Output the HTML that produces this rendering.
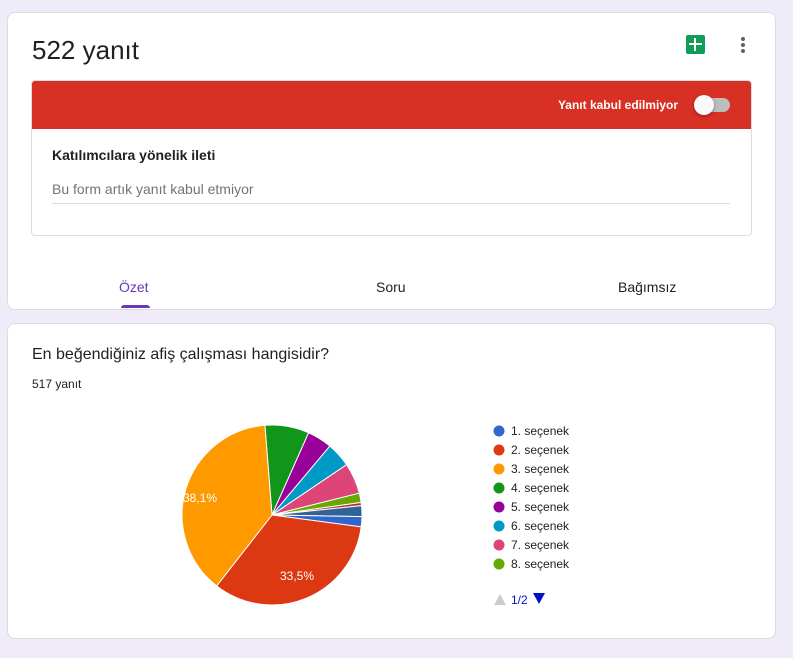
<!DOCTYPE html>
<html><head><meta charset="utf-8"><style>
body{margin:0;background:#f0ebf8;font-family:"Liberation Sans",Arial,sans-serif;width:793px;height:658px;position:relative;overflow:hidden}
.card{position:absolute;background:#fff;border:1px solid #dadce0;border-radius:8px}
.abs{position:absolute}
</style></head><body>
<div class="card" style="left:7px;top:12px;width:767px;height:296px">
  <div class="abs" style="left:24px;top:22px;font-size:26px;color:#202124">522 yanıt</div>
  <div class="abs" style="left:678px;top:22px;width:19px;height:19px;background:#0f9d58;border-radius:2px">
    <div class="abs" style="left:3px;top:8px;width:13px;height:2px;background:#fff"></div>
    <div class="abs" style="left:8px;top:3px;width:2px;height:13px;background:#fff"></div>
  </div>
  <div class="abs" style="left:733px;top:24px;width:4px;height:4px;border-radius:2px;background:#5f6368;box-shadow:0 6px 0 #5f6368,0 12px 0 #5f6368"></div>
  <div class="abs" style="left:23px;top:67px;width:719px;height:154px;border:1px solid #dadce0;border-radius:4px;overflow:hidden">
    <div style="height:48px;background:#d93025;position:relative">
      <div class="abs" style="right:73px;top:17px;color:#fff;font-weight:bold;font-size:12px">Yanıt kabul edilmiyor</div>
      <div class="abs" style="left:664px;top:17px;width:34px;height:14px;border-radius:7px;background:#bdbdbd"></div>
      <div class="abs" style="left:662px;top:14px;width:20px;height:20px;border-radius:10px;background:#fafafa;box-shadow:0 1px 3px rgba(0,0,0,.4)"></div>
    </div>
    <div class="abs" style="left:20px;top:66px;font-size:14px;font-weight:bold;color:#202124">Katılımcılara yönelik ileti</div>
    <div class="abs" style="left:20px;top:100px;font-size:14px;color:#70757a">Bu form artık yanıt kabul etmiyor</div>
    <div class="abs" style="left:20px;top:122px;width:678px;height:1px;background:#dadce0"></div>
  </div>
  <div class="abs" style="left:111px;top:266px;font-size:14px;color:#673ab7">Özet</div>
  <div class="abs" style="left:113px;top:292px;width:29px;height:3px;background:#673ab7;border-radius:3px 3px 0 0"></div>
  <div class="abs" style="left:368px;top:266px;font-size:14px;color:#202124">Soru</div>
  <div class="abs" style="left:610px;top:266px;font-size:14px;color:#202124">Bağımsız</div>
</div>
<div class="card" style="left:7px;top:323px;width:767px;height:314px">
  <div class="abs" style="left:24px;top:22px;font-size:16px;color:#202124">En beğendiğiniz afiş çalışması hangisidir?</div>
  <div class="abs" style="left:24px;top:53px;font-size:12px;color:#202124">517 yanıt</div>
</div>
<svg class="abs" style="left:0;top:0" width="793" height="658">
<g stroke="#fff" stroke-width="1">
<path d="M272 515L264.9 425.3A90 90 0 0 1 308.6 432.8Z" fill="#109618"/>
<path d="M272 515L308.6 432.8A90 90 0 0 1 329.9 446.1Z" fill="#990099"/>
<path d="M272 515L329.9 446.1A90 90 0 0 1 346.6 464.7Z" fill="#0099c6"/>
<path d="M272 515L346.6 464.7A90 90 0 0 1 359.3 493.2Z" fill="#dd4477"/>
<path d="M272 515L359.3 493.2A90 90 0 0 1 361.1 502.5Z" fill="#66aa00"/>
<path d="M272 515L361.1 502.5A90 90 0 0 1 361.5 505.6Z" fill="#b82e2e"/>
<path d="M272 515L361.5 505.6A90 90 0 0 1 362 516.6Z" fill="#316395"/>
<path d="M272 515L362 516.6A90 90 0 0 1 361.2 526.9Z" fill="#3366cc"/>
<path d="M272 515L361.2 526.9A90 90 0 0 1 216.6 585.9Z" fill="#dc3912"/>
<path d="M272 515L216.6 585.9A90 90 0 0 1 264.9 425.3Z" fill="#ff9900"/>
</g>
<text x="183" y="502" fill="#fff" font-size="12" font-family="Liberation Sans,Arial,sans-serif">38,1%</text>
<text x="280" y="580" fill="#fff" font-size="12" font-family="Liberation Sans,Arial,sans-serif">33,5%</text>
<g font-size="12" fill="#222" font-family="Liberation Sans,Arial,sans-serif">
<circle cx="499" cy="431" r="5.5" fill="#3366cc"/><text x="511" y="435">1. seçenek</text>
<circle cx="499" cy="450" r="5.5" fill="#dc3912"/><text x="511" y="454">2. seçenek</text>
<circle cx="499" cy="469" r="5.5" fill="#ff9900"/><text x="511" y="473">3. seçenek</text>
<circle cx="499" cy="488" r="5.5" fill="#109618"/><text x="511" y="492">4. seçenek</text>
<circle cx="499" cy="507" r="5.5" fill="#990099"/><text x="511" y="511">5. seçenek</text>
<circle cx="499" cy="526" r="5.5" fill="#0099c6"/><text x="511" y="530">6. seçenek</text>
<circle cx="499" cy="545" r="5.5" fill="#dd4477"/><text x="511" y="549">7. seçenek</text>
<circle cx="499" cy="564" r="5.5" fill="#66aa00"/><text x="511" y="568">8. seçenek</text>
<path d="M494 605L500 594L506 605Z" fill="#ccc"/>
<text x="511" y="604" fill="#0011cc">1/2</text>
<path d="M533 593L545 593L539 604Z" fill="#0011cc"/>
</g>
</svg>
</body></html>
